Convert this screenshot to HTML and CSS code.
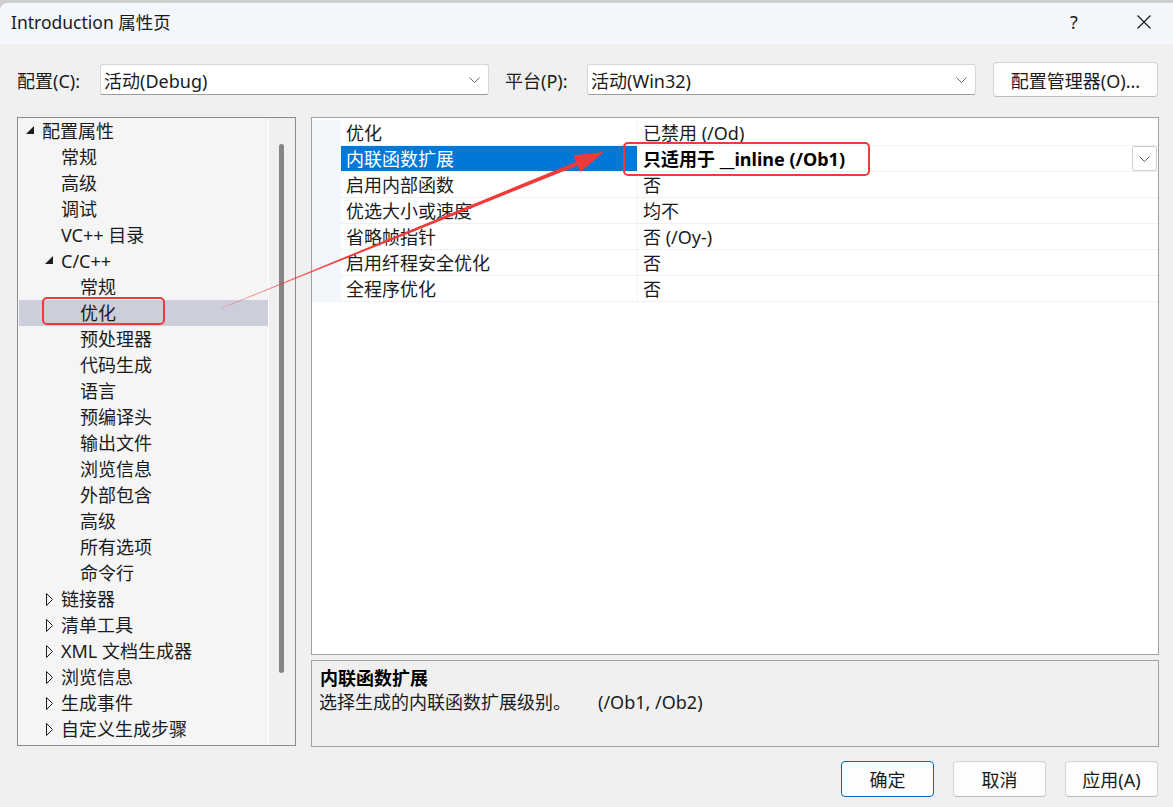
FILE: index.html
```html
<!DOCTYPE html>
<html lang="zh-CN">
<head>
<meta charset="utf-8">
<title>Introduction 属性页</title>
<link rel="stylesheet" href="styles.css">
</head>
<body>
<div class="window">
  <div class="titlebar">
    <span class="title">Introduction 属性页</span>
    <span class="help">?</span>
    <span class="close">
      <svg width="14" height="14" viewBox="0 0 14 14"><path d="M0.5 0.5 L13.5 13.5 M13.5 0.5 L0.5 13.5" stroke="#1a1a1a" stroke-width="1.2" fill="none"/></svg>
    </span>
  </div>

  <div class="config">
    <span class="lbl lbl-c">配置(C):</span>
    <div class="combo">
      <span class="combo-text">活动(Debug)</span>
      <svg class="chev" width="11" height="6" viewBox="0 0 11 6"><polyline points="0.5,0.5 5.5,5.5 10.5,0.5" stroke="#6b6b6b" fill="none"/></svg>
    </div>
    <span class="lbl lbl-p">平台(P):</span>
    <div class="combo">
      <span class="combo-text">活动(Win32)</span>
      <svg class="chev" width="11" height="6" viewBox="0 0 11 6"><polyline points="0.5,0.5 5.5,5.5 10.5,0.5" stroke="#6b6b6b" fill="none"/></svg>
    </div>
    <button class="btn mgr">配置管理器(O)...</button>
  </div>

  <div class="main">
    <div class="tree">
      <div class="tree-list">
        <div class="node l0"><span class="tw"><svg width="9" height="9" viewBox="0 0 9 9"><polygon points="8,0 8,8 0,8" fill="#1e1e1e"/></svg></span>配置属性</div>
        <div class="node l1"><span class="tw"></span>常规</div>
        <div class="node l1"><span class="tw"></span>高级</div>
        <div class="node l1"><span class="tw"></span>调试</div>
        <div class="node l1"><span class="tw"></span>VC++ 目录</div>
        <div class="node l1"><span class="tw"><svg width="9" height="9" viewBox="0 0 9 9"><polygon points="8,0 8,8 0,8" fill="#1e1e1e"/></svg></span>C/C++</div>
        <div class="node l2"><span class="tw"></span>常规</div>
        <div class="node l2 sel"><span class="tw"></span>优化</div>
        <div class="node l2"><span class="tw"></span>预处理器</div>
        <div class="node l2"><span class="tw"></span>代码生成</div>
        <div class="node l2"><span class="tw"></span>语言</div>
        <div class="node l2"><span class="tw"></span>预编译头</div>
        <div class="node l2"><span class="tw"></span>输出文件</div>
        <div class="node l2"><span class="tw"></span>浏览信息</div>
        <div class="node l2"><span class="tw"></span>外部包含</div>
        <div class="node l2"><span class="tw"></span>高级</div>
        <div class="node l2"><span class="tw"></span>所有选项</div>
        <div class="node l2"><span class="tw"></span>命令行</div>
        <div class="node l1"><span class="tw tc"><svg width="8" height="13" viewBox="0 0 8 13"><polygon points="0.5,0.5 6.5,6.5 0.5,12.5" fill="none" stroke="#1e1e1e"/></svg></span>链接器</div>
        <div class="node l1"><span class="tw tc"><svg width="8" height="13" viewBox="0 0 8 13"><polygon points="0.5,0.5 6.5,6.5 0.5,12.5" fill="none" stroke="#1e1e1e"/></svg></span>清单工具</div>
        <div class="node l1"><span class="tw tc"><svg width="8" height="13" viewBox="0 0 8 13"><polygon points="0.5,0.5 6.5,6.5 0.5,12.5" fill="none" stroke="#1e1e1e"/></svg></span>XML 文档生成器</div>
        <div class="node l1"><span class="tw tc"><svg width="8" height="13" viewBox="0 0 8 13"><polygon points="0.5,0.5 6.5,6.5 0.5,12.5" fill="none" stroke="#1e1e1e"/></svg></span>浏览信息</div>
        <div class="node l1"><span class="tw tc"><svg width="8" height="13" viewBox="0 0 8 13"><polygon points="0.5,0.5 6.5,6.5 0.5,12.5" fill="none" stroke="#1e1e1e"/></svg></span>生成事件</div>
        <div class="node l1"><span class="tw tc"><svg width="8" height="13" viewBox="0 0 8 13"><polygon points="0.5,0.5 6.5,6.5 0.5,12.5" fill="none" stroke="#1e1e1e"/></svg></span>自定义生成步骤</div>
      </div>
      <div class="vscroll"><div class="thumb"></div></div>
    </div>

    <div class="right">
      <div class="grid">
        <div class="prow"><span class="gut"></span><span class="pname">优化</span><span class="pval">已禁用 (/Od)</span></div>
        <div class="prow active"><span class="gut"></span><span class="pname">内联函数扩展</span><span class="pval"><b>只适用于 __inline (/Ob1)</b><span class="dd"><svg width="11" height="6" viewBox="0 0 11 6"><polyline points="0.5,0.5 5.5,5.5 10.5,0.5" stroke="#555" fill="none"/></svg></span></span></div>
        <div class="prow"><span class="gut"></span><span class="pname">启用内部函数</span><span class="pval">否</span></div>
        <div class="prow"><span class="gut"></span><span class="pname">优选大小或速度</span><span class="pval">均不</span></div>
        <div class="prow"><span class="gut"></span><span class="pname">省略帧指针</span><span class="pval">否 (/Oy-)</span></div>
        <div class="prow"><span class="gut"></span><span class="pname">启用纤程安全优化</span><span class="pval">否</span></div>
        <div class="prow"><span class="gut"></span><span class="pname">全程序优化</span><span class="pval">否</span></div>
      </div>
      <div class="desc">
        <div class="desc-title">内联函数扩展</div>
        <div class="desc-text">选择生成的内联函数扩展级别。<span class="desc-sw">(/Ob1, /Ob2)</span></div>
      </div>
    </div>
  </div>

  <div class="footer">
    <button class="btn ok">确定</button>
    <button class="btn">取消</button>
    <button class="btn">应用(A)</button>
  </div>

  <svg class="annot" width="1173" height="807" viewBox="0 0 1173 807">
    <defs>
      <linearGradient id="fade" gradientUnits="userSpaceOnUse" x1="222" y1="308" x2="577" y2="164">
        <stop offset="0" stop-color="#f03a3a" stop-opacity="0.35"/>
        <stop offset="0.35" stop-color="#f03a3a" stop-opacity="1"/>
        <stop offset="1" stop-color="#f03a3a" stop-opacity="1"/>
      </linearGradient>
    </defs>
    <rect x="43" y="298" width="121" height="26" rx="4" fill="none" stroke="#f03a3a" stroke-width="2"/>
    <rect x="624" y="143" width="245" height="32" rx="4" fill="none" stroke="#f03a3a" stroke-width="2"/>
    <polygon points="222.2,308.3 221.8,307.7 576.2,161.7 577.8,165.5" fill="url(#fade)"/>
    <polygon points="604,152 573.6,155.3 580.4,172" fill="#f03a3a"/>
  </svg>
</div>
</body>
</html>
```

FILE: styles.css
```css
* { box-sizing: border-box; }

html, body {
  margin: 0;
  padding: 0;
}

body {
  width: 1173px;
  height: 807px;
  overflow: hidden;
  background: #cfcfcf;
  font-family: "Noto Sans", "Noto Sans CJK SC", sans-serif;
  font-size: 18px;
  color: #1b1b1b;
}

.window {
  position: relative;
  margin-top: 3px;
  width: 1173px;
  height: 804px;
  background: #f0f0f0;
  border-top-left-radius: 8px;
  overflow: hidden;
}

/* title bar */
.titlebar {
  height: 41px;
  background: #f3f6fb;
  display: flex;
  align-items: center;
  padding-left: 11px;
  padding-bottom: 4px;
}
.title {
  font-size: 17.5px;
  color: #1a1a1a;
}
.help {
  margin-left: auto;
  width: 46px;
  text-align: center;
  font-size: 18px;
  color: #1a1a1a;
}
.close {
  margin-left: 24px;
  margin-right: 6px;
  width: 46px;
  height: 30px;
  display: flex;
  align-items: center;
  justify-content: center;
}

/* config row */
.config {
  display: flex;
  align-items: center;
  height: 35px;
  margin-top: 18px;
  padding-left: 17px;
}
.lbl {
  white-space: nowrap;
}
.lbl-c { width: 83px; }
.lbl-p { width: 82px; margin-left: 16px; }
.combo {
  width: 389px;
  height: 31px;
  background: #ffffff;
  border: 1px solid #d6d6d6;
  border-bottom-color: #9a9a9a;
  border-radius: 3px;
  display: flex;
  align-items: center;
  padding-left: 3px;
  padding-right: 8px;
}
.combo-text { flex: 1; }
.chev { display: block; }

.btn {
  font-family: inherit;
  font-size: 18px;
  color: #1b1b1b;
  background: #fdfdfd;
  border: 1px solid #d3d3d3;
  border-bottom-color: #bdbdbd;
  border-radius: 4px;
  padding: 0;
  width: 93px;
  height: 36px;
}
.mgr {
  width: 165px;
  height: 35px;
  margin-left: 17px;
}

/* main area */
.main {
  display: flex;
  gap: 15px;
  margin-top: 20px;
  padding-left: 17px;
}

.tree {
  width: 279px;
  height: 629px;
  border: 1px solid #8c8c8c;
  background: #f5f5f5;
  display: flex;
}
.tree-list {
  width: 250px;
  padding-left: 1px;
}
.node {
  height: 26px;
  line-height: 26px;
  display: flex;
  align-items: center;
  white-space: nowrap;
}
.node.l0 { padding-left: 6px; }
.node.l1 { padding-left: 25px; }
.node.l2 { padding-left: 44px; }
.node.sel { background: #cccedb; }
.tw {
  width: 17px;
  height: 26px;
  flex: none;
  display: flex;
  align-items: center;
  padding-left: 1px;
}
.tw svg { display: block; margin-top: -1px; }
.tw.tc { padding-left: 2px; }
.tw.tc svg { margin-top: 0; }

.vscroll {
  flex: 1;
  border-left: 1px solid #ffffff;
  background: #f0f0f0;
  padding-left: 10px;
  padding-top: 26px;
}
.thumb {
  width: 5px;
  height: 529px;
  background: #858585;
  border-radius: 3px;
}

.right {
  width: 848px;
  display: flex;
  flex-direction: column;
  gap: 5px;
}

.grid {
  height: 538px;
  border: 1px solid #a0a0a0;
  background: #ffffff;
  padding-top: 2px;
}
.prow {
  height: 26px;
  display: flex;
}
.gut {
  width: 29px;
  flex: none;
  background: #f3f7fc;
}
.pname {
  width: 297px;
  flex: none;
  padding-left: 5px;
  padding-top: 2px;
  line-height: 23px;
  border-bottom: 1px solid #f0f0f0;
  border-right: 1px solid #f4f4f4;
  white-space: nowrap;
}
.pval {
  flex: 1;
  padding-left: 5px;
  padding-top: 2px;
  line-height: 23px;
  border-bottom: 1px solid #f0f0f0;
  display: flex;
  align-items: center;
  white-space: nowrap;
}
.prow.active .pname {
  background: #0078d7;
  color: #ffffff;
}
.pval b {
  font-weight: 700;
  color: #000000;
}
.dd {
  margin-left: auto;
  margin-right: 1px;
  margin-top: -2px;
  width: 25px;
  height: 25px;
  border: 1px solid #cfcfcf;
  border-radius: 2px;
  background: #ffffff;
  display: flex;
  align-items: center;
  justify-content: center;
}
.dd svg { display: block; }

.desc {
  height: 87px;
  border: 1px solid #a0a0a0;
  background: #f0f0f0;
  padding: 5px 8px 0 8px;
}
.desc-title {
  font-weight: 700;
  line-height: 24px;
  color: #000000;
}
.desc-text {
  line-height: 24px;
  margin-left: -1px;
}
.desc-sw {
  margin-left: 27px;
}

/* footer */
.footer {
  display: flex;
  justify-content: flex-end;
  gap: 19px;
  padding-right: 15px;
  margin-top: 14px;
}
.btn.ok {
  border: 1px solid #0067c0;
}

/* annotation overlay */
.annot {
  position: absolute;
  left: 0;
  top: -3px;
  pointer-events: none;
}
```
